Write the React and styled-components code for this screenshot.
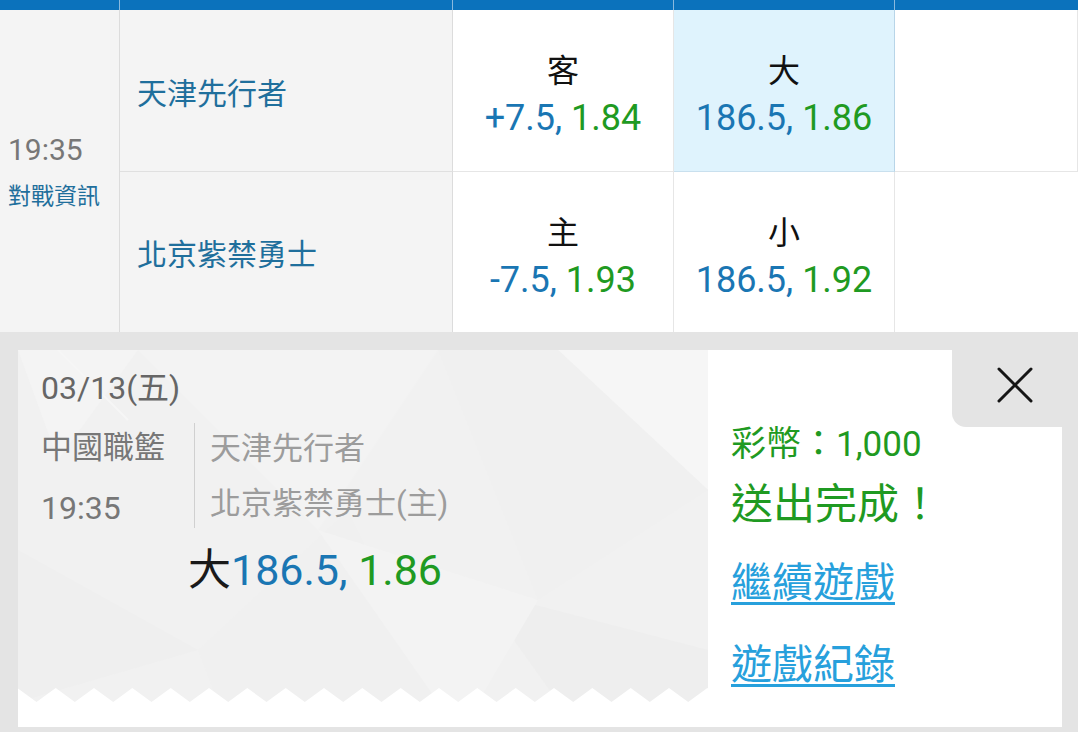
import React from 'react';
import styled, { createGlobalStyle } from 'styled-components';

const Global = createGlobalStyle`
  html, body { margin: 0; padding: 0; }
  body {
    background: #e4e4e4;
    font-family: Roboto, "Noto Sans CJK TC", sans-serif;
    width: 1078px;
    height: 732px;
    overflow: hidden;
  }
`;

const COLS = '120px 333px 221px 221px 1fr';
const BLUE = '#1a76b3';
const GREEN = '#1f9a22';

const HeaderBar = styled.div`
  display: grid;
  grid-template-columns: ${COLS};
  height: 10px;
  background: #0b72bc;
`;

const HeaderCell = styled.div`
  border-right: 1px solid #8ab9de;
  &:last-child { border-right: none; }
`;

const Table = styled.div`
  display: grid;
  grid-template-columns: ${COLS};
  grid-template-rows: 162px 160px;
  background: #fff;
`;

const TimeCell = styled.div`
  grid-row: span 2;
  background: #f4f4f4;
  border-right: 1px solid #dcdcdc;
  display: flex;
  flex-direction: column;
  justify-content: center;
  padding-left: 8px;
`;

const TimeText = styled.div`
  font-size: 30px;
  line-height: 40px;
  color: #777;
`;

const InfoLink = styled.div`
  margin-top: 12px;
  font-size: 23px;
  line-height: 30px;
  color: #1f6f9c;
`;

const TeamCell = styled.div`
  background: #f4f4f4;
  border-right: 1px solid #dcdcdc;
  border-bottom: ${p => (p.$first ? '1px solid #e0e0e0' : 'none')};
  display: flex;
  align-items: center;
  padding-left: 17px;
  font-size: 30px;
  color: #1f6f9c;
`;

const OddsCell = styled.div`
  background: ${p => (p.$active ? '#dff3fd' : '#fff')};
  border-right: 1px solid ${p => (p.$active ? '#b8d5e8' : '#e6e6e6')};
  border-bottom: ${p => (p.$first ? `1px solid ${p.$active ? '#c9e0ee' : '#e6e6e6'}` : 'none')};
  display: flex;
  flex-direction: column;
  align-items: center;
  padding-top: 40px;
  &:last-child { border-right: none; }
`;

const OddsLabel = styled.div`
  font-size: 32px;
  line-height: 42px;
  color: #111;
`;

const OddsValue = styled.div`
  font-size: 36px;
  line-height: 52px;
`;

const Blue = styled.span` color: ${BLUE}; `;
const Green = styled.span` color: ${GREEN}; `;
const Dark = styled.span` color: #1a1a1a; `;

const Overlay = styled.div`
  padding: 18px 16px 5px 18px;
`;

const Popup = styled.div`
  display: flex;
  height: 377px;
`;

const Ticket = styled.div`
  width: 690px;
  display: flex;
  flex-direction: column;
  background: #fff;
`;

const TicketBody = styled.div`
  position: relative;
  height: 352px;
  box-sizing: border-box;
  padding: 18px 0 0 23px;
`;

const TicketBg = styled.svg`
  position: absolute;
  inset: 0;
  width: 100%;
  height: 100%;
  z-index: 0;
`;

const TicketContent = styled.div`
  position: relative;
  z-index: 1;
`;

const DateLine = styled.div`
  font-size: 32px;
  line-height: 40px;
  color: #666;
`;

const InfoRow = styled.div`
  display: flex;
  margin-top: 10px;
`;

const LeagueCol = styled.div`
  width: 153px;
  font-size: 31px;
  line-height: 60px;
  color: #777;
`;

const LeagueTime = styled.div`
  font-size: 32px;
`;

const VDivider = styled.div`
  width: 1px;
  height: 105px;
  margin-top: 5px;
  background: #d0d0d0;
`;

const TeamsCol = styled.div`
  padding: 2.5px 0 0 15px;
  font-size: 31px;
  line-height: 55px;
  color: #9c9c9c;
`;

const PickLine = styled.div`
  margin-top: 7px;
  padding-left: 147px;
  font-size: 43px;
  line-height: 50px;
`;

const TicketFoot = styled.div`
  flex: 1;
  background: #fff;
`;

const ResultPanel = styled.div`
  flex: 1;
  position: relative;
  background: #fff;
  padding: 73px 0 0 23px;
`;

const CloseNotch = styled.div`
  position: absolute;
  top: 0;
  right: 0;
  width: 110px;
  height: 77px;
  box-sizing: border-box;
  background: #e4e4e4;
  border-bottom-left-radius: 14px;
  padding: 17px 0 0 45px;
`;

const Coins = styled.div`
  font-size: 35px;
  line-height: 44px;
  color: ${GREEN};
`;

const Done = styled.div`
  margin-top: 10px;
  font-size: 42px;
  line-height: 56px;
  color: ${GREEN};
`;

const ActionLink = styled.a`
  display: block;
  width: max-content;
  margin-top: ${p => p.$gap}px;
  font-size: 41px;
  line-height: 56px;
  color: #27a0dc;
  text-decoration: underline;
  text-decoration-thickness: 3px;
  text-underline-offset: 5px;
  cursor: pointer;
`;

const rows = [
  { team: '天津先行者', side: '客', hc: '+7.5,', hcOdds: '1.84', ou: '大', ouLine: '186.5,', ouOdds: '1.86', active: true },
  { team: '北京紫禁勇士', side: '主', hc: '-7.5,', hcOdds: '1.93', ou: '小', ouLine: '186.5,', ouOdds: '1.92', active: false },
];

function zigzag() {
  const p = 690 / 18;
  const pts = [];
  for (let k = -1; k <= 19; k++) {
    const v = 18.5 + k * p;
    pts.push(`${v.toFixed(1)},352`);
    pts.push(`${(v + p / 2).toFixed(1)},338`);
  }
  return `-40,360 ${pts.join(' ')} 740,360`;
}

export default function App() {
  return (
    <>
      <Global />
      <HeaderBar>
        <HeaderCell /><HeaderCell /><HeaderCell /><HeaderCell /><HeaderCell />
      </HeaderBar>
      <Table>
        <TimeCell>
          <TimeText>19:35</TimeText>
          <InfoLink>對戰資訊</InfoLink>
        </TimeCell>
        {rows.map((r, i) => (
          <React.Fragment key={r.team}>
            <TeamCell $first={i === 0}>{r.team}</TeamCell>
            <OddsCell $first={i === 0}>
              <OddsLabel>{r.side}</OddsLabel>
              <OddsValue><Blue>{r.hc}</Blue> <Green>{r.hcOdds}</Green></OddsValue>
            </OddsCell>
            <OddsCell $first={i === 0} $active={r.active}>
              <OddsLabel>{r.ou}</OddsLabel>
              <OddsValue><Blue>{r.ouLine}</Blue> <Green>{r.ouOdds}</Green></OddsValue>
            </OddsCell>
            <OddsCell $first={i === 0} />
          </React.Fragment>
        ))}
      </Table>
      <Overlay>
        <Popup>
          <Ticket>
            <TicketBody>
              <TicketBg viewBox="0 0 690 352" preserveAspectRatio="none">
                <rect x="0" y="0" width="690" height="352" fill="#f1f1f1" />
                <polygon points="0,0 120,0 40,110" fill="#f4f4f4" />
                <polygon points="120,0 420,0 300,180" fill="#f3f3f3" />
                <polygon points="540,0 690,0 690,140" fill="#f6f6f6" />
                <polygon points="420,0 540,0 690,140 520,250" fill="#f0f0f0" />
                <polygon points="0,200 180,300 0,352" fill="#efefef" />
                <polygon points="180,300 330,160 420,352 200,352" fill="#f0f0f0" />
                <polygon points="460,240 690,300 690,352 540,352" fill="#eeeeee" />
                <polygon points="300,180 520,250 460,352 420,352" fill="#f3f3f3" />
                <line x1="40" y1="0" x2="110" y2="70" stroke="#f6f6f6" strokeWidth="2" />
                <polygon points={zigzag()} fill="#ffffff" />
              </TicketBg>
              <TicketContent>
                <DateLine>03/13(五)</DateLine>
                <InfoRow>
                  <LeagueCol>
                    <div>中國職籃</div>
                    <LeagueTime>19:35</LeagueTime>
                  </LeagueCol>
                  <VDivider />
                  <TeamsCol>
                    <div>天津先行者</div>
                    <div>北京紫禁勇士(主)</div>
                  </TeamsCol>
                </InfoRow>
                <PickLine>
                  <Dark>大</Dark><Blue>186.5,</Blue> <Green>1.86</Green>
                </PickLine>
              </TicketContent>
            </TicketBody>
            <TicketFoot />
          </Ticket>
          <ResultPanel>
            <CloseNotch>
              <svg width="36" height="36" viewBox="0 0 36 36">
                <path d="M2 2 L34 34 M34 2 L2 34" stroke="#151515" strokeWidth="3" strokeLinecap="round" />
              </svg>
            </CloseNotch>
            <Coins>彩幣：1,000</Coins>
            <Done>送出完成！</Done>
            <ActionLink $gap={22}>繼續遊戲</ActionLink>
            <ActionLink $gap={26}>遊戲紀錄</ActionLink>
          </ResultPanel>
        </Popup>
      </Overlay>
    </>
  );
}
